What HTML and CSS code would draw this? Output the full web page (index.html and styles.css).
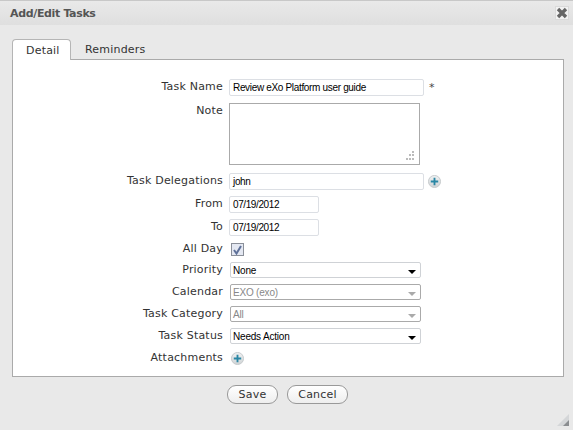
FILE: index.html
```html
<!DOCTYPE html>
<html lang="en">
<head>
    <meta charset="UTF-8">
    <title>Add/Edit Tasks</title>
    <link rel="stylesheet" href="styles.css">
</head>
<body>
    <div class="window">
        <div class="title-bar">
            <span class="title">Add/Edit Tasks</span>
            <span class="close-btn">
                <svg width="12" height="12" viewBox="0 0 12 12"><path d="M2 2 L10 10 M10 2 L2 10" stroke="#666" stroke-width="3.4"/></svg>
            </span>
        </div>

        <div class="tabs">
            <div class="tab active">Detail</div>
            <div class="tab">Reminders</div>
        </div>

        <div class="panel">
            <div class="form">
                <label>Task Name</label>
                <div class="field"><div class="input wide">Review eXo Platform user guide</div><span class="required">*</span></div>

                <label class="row-note">Note</label>
                <div class="field row-note"><div class="textarea">
                    <svg class="grip" width="10" height="9" viewBox="0 0 10 9"><path d="M8 0h2v2H8zM5 3h2v2H5zM8 3h2v2H8zM2 7h2v2H2zM5 7h2v2H5zM8 7h2v2H8z" fill="#bbb"/></svg>
                </div></div>

                <label class="row-deleg">Task Delegations</label>
                <div class="field row-deleg"><div class="input wide">john</div>
                    <svg class="plus deleg-plus" width="13" height="13" viewBox="0 0 14 14"><defs><linearGradient id="btn" x1="0" y1="0" x2="0" y2="1"><stop offset="0" stop-color="#f0f2f3"/><stop offset="1" stop-color="#cfd3d5"/></linearGradient></defs><circle cx="7" cy="7" r="6.5" fill="url(#btn)" stroke="#c4c8ca"/><path d="M7 3v8M3 7h8" stroke="#2a87a5" stroke-width="2"/></svg>
                </div>

                <label>From</label>
                <div class="field"><div class="input date">07/19/2012</div></div>

                <label>To</label>
                <div class="field"><div class="input date">07/19/2012</div></div>

                <label class="row-allday">All Day</label>
                <div class="field row-allday"><div class="checkbox">
                    <svg width="9" height="10" viewBox="0 0 9 10"><path d="M1 5 L3.5 8.5 L8 1" fill="none" stroke="#5f7199" stroke-width="2"/></svg>
                </div></div>

                <label class="row-select">Priority</label>
                <div class="field row-select"><div class="select">None<span class="arrow"></span></div></div>

                <label class="row-select">Calendar</label>
                <div class="field row-select"><div class="select disabled">EXO (exo)<span class="arrow"></span></div></div>

                <label class="row-select">Task Category</label>
                <div class="field row-select"><div class="select disabled">All<span class="arrow"></span></div></div>

                <label class="row-select">Task Status</label>
                <div class="field row-select"><div class="select">Needs Action<span class="arrow"></span></div></div>

                <label>Attachments</label>
                <div class="field attach"><svg class="plus" width="13" height="13" viewBox="0 0 14 14"><circle cx="7" cy="7" r="6.5" fill="url(#btn)" stroke="#c4c8ca"/><path d="M7 3v8M3 7h8" stroke="#2a87a5" stroke-width="2"/></svg></div>
            </div>
        </div>

        <div class="actions">
            <button class="save">Save</button>
            <button class="cancel">Cancel</button>
        </div>

        <svg class="resize" width="12" height="12" viewBox="0 0 12 12"><path d="M0 12 L12 0 V12 Z" fill="#d4d6d8"/><path d="M6 12 L12 6 V12 Z" fill="#8a8d90"/></svg>
    </div>
</body>
</html>
```

FILE: styles.css
```css
html, body {
    margin: 0;
    padding: 0;
}
body {
    width: 573px;
    height: 430px;
    overflow: hidden;
    font-family: "DejaVu Sans", Verdana, sans-serif;
    font-size: 11px;
    color: #333;
}
.window {
    position: relative;
    box-sizing: border-box;
    height: 430px;
    background-color: #e9e9e9;
    border-top: 1px solid #c8c8c8;
}
.title-bar {
    display: flex;
    justify-content: space-between;
    align-items: center;
    height: 24px;
    padding: 0 4px 0 10px;
    background: linear-gradient(#e9e9e9, #dfdfdf);
}
.title {
    font-size: 11px;
    font-weight: bold;
    letter-spacing: -0.35px;
    color: #555;
}
.close-btn {
    box-sizing: border-box;
    display: flex;
    align-items: center;
    justify-content: center;
    width: 14px;
    height: 14px;
    border: 1px solid #dadada;
    background-color: #f2f2f2;
}
.tabs {
    display: flex;
    height: 20px;
    margin: 14px 0 0 12px;
    position: relative;
    z-index: 1;
}
.tab {
    box-sizing: border-box;
    height: 20px;
    padding: 4px 14px 0;
    letter-spacing: 0.2px;
}
.tab.active {
    width: 59px;
    height: 21px;
    padding-left: 13px;
    background-color: #fff;
    border: 1px solid #b5b5b5;
    border-bottom: none;
    border-radius: 4px 4px 0 0;
}
.panel {
    box-sizing: border-box;
    height: 318px;
    margin: 0 9px 0 12px;
    padding: 19px 0 0;
    background-color: #fff;
    border: 1px solid #aaa;
}
.form {
    display: grid;
    grid-template-columns: 210px 1fr;
    column-gap: 6px;
    row-gap: 6px;
}
.form label {
    text-align: right;
    line-height: 15px;
    letter-spacing: 0.2px;
}
.field {
    display: flex;
    align-items: center;
    min-height: 17px;
    font-family: "Liberation Sans", Arial, sans-serif;
    font-size: 10px;
    color: #000;
}
.input {
    box-sizing: border-box;
    height: 17px;
    line-height: 16px;
    padding-left: 3px;
    border: 1px solid #dcdfe4;
    border-radius: 2px;
    background-color: #fff;
}
.input.wide {
    width: 195px;
    letter-spacing: -0.33px;
}
.input.date {
    width: 90px;
    letter-spacing: -0.4px;
}
.required {
    margin-left: 5px;
    font-family: "DejaVu Sans", sans-serif;
    font-size: 11px;
    color: #444;
}
.row-note {
    margin-top: 1px;
    margin-bottom: 2px;
}
.textarea {
    position: relative;
    box-sizing: border-box;
    width: 191px;
    height: 62px;
    border: 1px solid #aaa;
}
.grip {
    position: absolute;
    right: 5px;
    bottom: 4px;
}
.row-allday {
    margin-top: -1px;
}
.checkbox {
    box-sizing: border-box;
    width: 13px;
    height: 13px;
    margin-left: 2px;
    display: flex;
    align-items: center;
    justify-content: center;
    border: 1px solid #8a8f99;
    background-color: #e4e8f2;
}
.row-select {
    min-height: 16px;
}
.field.row-allday + .row-select, .field.row-allday + .row-select + .row-select {
    margin-top: -2px;
}
.select {
    position: relative;
    box-sizing: border-box;
    width: 191px;
    height: 16px;
    margin-left: 1px;
    line-height: 15px;
    padding-left: 2px;
    letter-spacing: -0.2px;
    border: 1px solid #cfd2d6;
    border-radius: 2px;
    background-color: #fff;
}
.select.disabled {
    color: #888;
    border-color: #aaa;
}
.arrow {
    position: absolute;
    right: 4px;
    top: 7px;
    width: 0;
    height: 0;
    border-left: 4px solid transparent;
    border-right: 4px solid transparent;
    border-top: 4px solid #000;
}
.select.disabled .arrow {
    border-top-color: #aaa;
}
.plus {
    flex: none;
}
.deleg-plus {
    margin-left: 4px;
}
.attach {
    padding-left: 2px;
}
.actions {
    display: flex;
    justify-content: center;
    gap: 9px;
    margin-top: 8px;
    padding-left: 2px;
}
.actions button {
    box-sizing: border-box;
    height: 19px;
    padding: 0;
    font-family: "DejaVu Sans", Verdana, sans-serif;
    font-size: 11px;
    letter-spacing: 0.2px;
    color: #333;
    background: linear-gradient(#fff, #eee);
    border: 1px solid #999;
    border-radius: 9px;
}
.save {
    width: 51px;
}
.cancel {
    width: 61px;
}
.resize {
    position: absolute;
    right: 4px;
    bottom: 4px;
}
```
